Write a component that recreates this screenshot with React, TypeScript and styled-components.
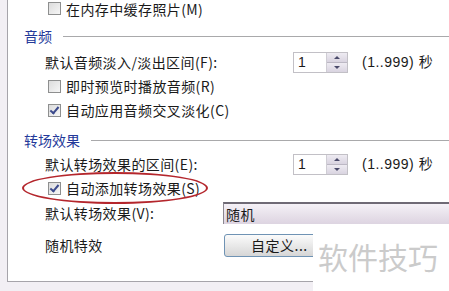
import React from 'react';
import styled, { createGlobalStyle } from 'styled-components';

const GlobalStyle = createGlobalStyle`
  html, body {
    margin: 0;
    padding: 0;
    overflow: hidden;
    background: #f2eff4;
  }
  body {
    font-family: "Noto Sans CJK SC", "Liberation Sans", sans-serif;
    font-size: 14px;
    color: #1a1a1a;
  }
`;

const Screen = styled.div`
  position: relative;
  width: 449px;
  height: 291px;
  overflow: hidden;
  background: #f2eff4;
`;

const Panel = styled.div`
  margin-left: 7px;
  width: 450px;
  height: 282px;
  box-sizing: border-box;
  background: #fff;
  border-left: 1px solid #a6a4aa;
  border-bottom: 1px solid #a6a4aa;
  display: flex;
  flex-direction: column;
`;

const Row = styled.div<{ $h?: number; $top?: number }>`
  display: flex;
  align-items: center;
  height: ${(p) => p.$h ?? 24}px;
  margin-top: ${(p) => p.$top ?? 0}px;
  padding-left: 37px;
  flex-shrink: 0;
  line-height: 1;
  white-space: nowrap;
  letter-spacing: 0.4px;
`;

const Header = styled.div<{ $top: number }>`
  display: flex;
  align-items: center;
  gap: 11px;
  height: 20px;
  margin-top: ${(p) => p.$top}px;
  padding-left: 16px;
  color: #24399a;
  flex-shrink: 0;
  &::after {
    content: '';
    flex: 1;
    height: 1px;
    background: #a9a9ab;
    box-shadow: 0 1px 0 #fff;
  }
`;

const Label = styled.span<{ $w?: number }>`
  display: inline-block;
  width: ${(p) => (p.$w ? `${p.$w}px` : 'auto')};
`;

const Box = styled.span<{ $checked?: boolean }>`
  position: relative;
  width: 11px;
  height: 11px;
  margin-left: 3px;
  margin-right: 5px;
  border: 1px solid #8e8f8f;
  background: linear-gradient(135deg, #dcdcdc, #f6f6f6);
  flex-shrink: 0;
  &::after {
    content: '';
    display: ${(p) => (p.$checked ? 'block' : 'none')};
    position: absolute;
    left: 3px;
    top: 0px;
    width: 3px;
    height: 7px;
    border-right: 2px solid #3c4a8c;
    border-bottom: 2px solid #3c4a8c;
    transform: rotate(40deg);
  }
`;

const Spin = styled.div`
  display: flex;
  height: 21px;
  width: 55px;
  box-sizing: border-box;
  border: 1px solid #c2c0c6;
  background: #fff;
`;

const SpinText = styled.span`
  flex: 1;
  padding-left: 4px;
  display: flex;
  align-items: center;
  font-family: "Liberation Sans", sans-serif;
  font-size: 14px;
`;

const SpinButtons = styled.div`
  width: 20px;
  display: flex;
  flex-direction: column;
  border-left: 1px solid #cfcdd4;
`;

const Arrow = styled.div<{ $down?: boolean }>`
  flex: 1;
  display: flex;
  align-items: center;
  justify-content: center;
  background: linear-gradient(#eeebf2, #d9d4e0);
  border-top: ${(p) => (p.$down ? '1px solid #bcb8c4' : 'none')};
  &::before {
    content: '';
    border-left: 3px solid transparent;
    border-right: 3px solid transparent;
    ${(p) => (p.$down ? 'border-top: 3px solid #4a4a6a;' : 'border-bottom: 3px solid #4a4a6a;')}
  }
`;

const Range = styled.span`
  margin-left: 14px;
  font-family: "Liberation Sans", "Noto Sans CJK SC", sans-serif;
  letter-spacing: 0.5px;
`;

const Select = styled.div`
  flex: 1;
  height: 22px;
  box-sizing: border-box;
  display: flex;
  align-items: center;
  padding-left: 2px;
  border-top: 2px solid #6f6a75;
  border-left: 1px solid #8b8790;
  background: linear-gradient(#f5f1f7, #e6dfe9 60%, #ddd4e1);
`;

const Button = styled.div`
  width: 96px;
  height: 23px;
  box-sizing: border-box;
  margin-left: 1px;
  border: 1px solid #6f93b4;
  border-radius: 3px;
  background: linear-gradient(#fbfbfb, #e9e9e9 50%, #d6d6d6);
  display: flex;
  align-items: center;
  padding-left: 26px;
  letter-spacing: 0.5px;
`;

const Oval = styled.div`
  position: absolute;
  left: 22px;
  top: 172px;
  width: 186px;
  height: 32px;
  box-sizing: border-box;
  border: 2px solid #b4262c;
  border-radius: 50%;
  pointer-events: none;
`;

const Watermark = styled.div`
  position: absolute;
  left: 313px;
  top: 225px;
  right: 0;
  bottom: 0;
  background: #fff;
  color: #cbcbcb;
  font-size: 30px;
  line-height: 1;
  padding: 16px 0 0 5px;
  white-space: nowrap;
`;

const Check = ({ checked, text, h }: { checked?: boolean; text: string; h?: number }) => (
  <Row $h={h}>
    <Box $checked={checked} />
    <span>{text}</span>
  </Row>
);

const SpinRow = ({ label, top }: { label: string; top: number }) => (
  <Row $top={top}>
    <Label $w={248}>{label}</Label>
    <Spin>
      <SpinText>1</SpinText>
      <SpinButtons>
        <Arrow />
        <Arrow $down />
      </SpinButtons>
    </Spin>
    <Range>(1..999) 秒</Range>
  </Row>
);

export default function App() {
  return (
    <>
      <GlobalStyle />
      <Screen>
        <Panel>
          <Check h={17} text="在内存中缓存照片(M)" />
          <Header $top={9}>音频</Header>
          <SpinRow top={4} label="默认音频淡入/淡出区间(F):" />
          <Check text="即时预览时播放音频(R)" />
          <Check checked text="自动应用音频交叉淡化(C)" />
          <Header $top={8}>转场效果</Header>
          <SpinRow top={2} label="默认转场效果的区间(E):" />
          <Check checked text="自动添加转场效果(S)" />
          <Row $h={26}>
            <Label $w={178}>默认转场效果(V):</Label>
            <Select>随机</Select>
          </Row>
          <Row $h={26} $top={6}>
            <Label $w={178}>随机特效</Label>
            <Button>自定义...</Button>
          </Row>
        </Panel>
        <Oval />
        <Watermark>软件技巧</Watermark>
      </Screen>
    </>
  );
}
